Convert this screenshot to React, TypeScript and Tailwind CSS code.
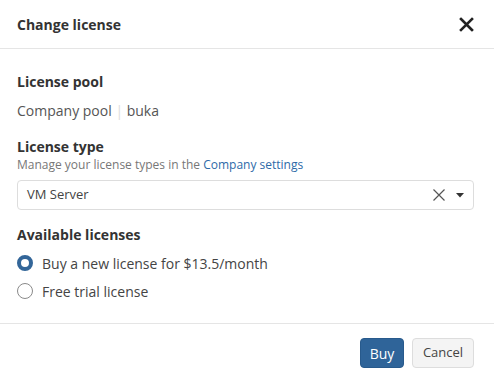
import { useState } from "react";

const font = { fontFamily: '"Open Sans", "Liberation Sans", sans-serif' };

const Radio = ({ checked, label, onClick }: { checked: boolean; label: string; onClick: () => void }) => (
    <label onClick={onClick} className="flex items-center h-[28px] cursor-pointer">
        {checked
            ? <span className="w-[16px] h-[16px] rounded-full border-[4.5px] border-[#336699] bg-white mr-[9px]" />
            : <span className="w-[16px] h-[16px] rounded-full border border-[#8a8a8a] bg-white mr-[9px]" />}
        <span className="text-[14px] text-[#444]">{label}</span>
    </label>
)

export default function App() {
    const [option, setOption] = useState(0)

    return (
        <div style={font} className="w-[494px] h-[380px] bg-white flex flex-col text-[#333]">
            <div className="h-[49px] pl-[17px] pr-[20px] flex items-center justify-between border-b border-[#e5e5e5]">
                <h2 className="text-[14px] font-bold text-[#333] pt-[1px]">Change license</h2>
                <button type="button" className="text-[#222]">
                    <svg width="15" height="15" viewBox="0 0 15 15">
                        <path d="M2 2 L13 13 M13 2 L2 13" stroke="currentColor" strokeWidth="2.6" strokeLinecap="square" />
                    </svg>
                </button>
            </div>

            <div className="flex-1 pl-[17px] pr-[20px] pt-[23px]">
                <h3 className="text-[14px] font-bold leading-[20px]">License pool</h3>
                <p className="text-[14px] leading-[20px] text-[#555] mt-[9px]">
                    Company pool <span className="text-[#ddd]">|</span> buka
                </p>

                <h3 className="text-[14px] font-bold leading-[20px] mt-[16px]">License type</h3>
                <p className="text-[12px] leading-[16px] text-[#777]">
                    Manage your license types in the <a className="text-[#2d6aa8]">Company settings</a>
                </p>

                <div className="mt-[7px] h-[30px] border border-[#ddd] rounded-[4px] flex items-center pl-[9px] pr-[9px]">
                    <span className="flex-1 text-[13px] text-[#444]">VM Server</span>
                    <svg width="14" height="14" viewBox="0 0 14 14" className="mr-[10px]">
                        <path d="M1.5 1.5 L12.5 12.5 M12.5 1.5 L1.5 12.5" stroke="#555" strokeWidth="1.2" />
                    </svg>
                    <svg width="8" height="5" viewBox="0 0 8 5">
                        <path d="M0 0 H8 L4 4.5 Z" fill="#333" />
                    </svg>
                </div>

                <h3 className="text-[14px] font-bold leading-[20px] mt-[15px]">Available licenses</h3>
                <div className="mt-[4px] flex flex-col">
                    <Radio checked={option === 0} label="Buy a new license for $13.5/month" onClick={() => setOption(0)} />
                    <Radio checked={option === 1} label="Free trial license" onClick={() => setOption(1)} />
                </div>
            </div>

            <div className="h-[57px] border-t border-[#e5e5e5] px-[20px] flex items-start justify-end gap-[8px] pt-[14px]">
                <button type="button" className="h-[30px] w-[44px] rounded-[4px] bg-[#2f6499] border border-[#285a8c] text-white text-[14px]">Buy</button>
                <button type="button" className="h-[30px] w-[62px] rounded-[4px] bg-[#f4f4f4] border border-[#ddd] text-[#444] text-[13px]">Cancel</button>
            </div>
        </div>
    )
}
